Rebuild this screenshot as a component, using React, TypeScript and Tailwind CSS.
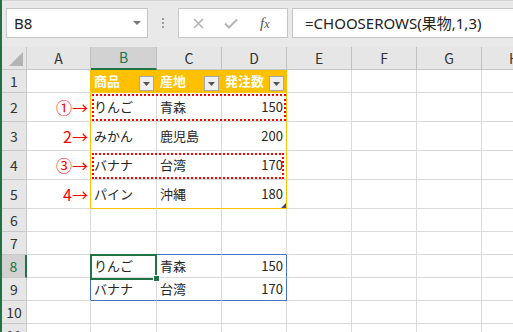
import React from 'react';

const cols = ['A', 'B', 'C', 'D', 'E', 'F', 'G', 'H'];

type CellData = { text?: string; align?: 'left' | 'right'; note?: string };

const body: Record<number, CellData[]> = {
  2: [{ note: '①→' }, { text: 'りんご' }, { text: '青森' }, { text: '150', align: 'right' }],
  3: [{ note: '2→' }, { text: 'みかん' }, { text: '鹿児島' }, { text: '200', align: 'right' }],
  4: [{ note: '③→' }, { text: 'バナナ' }, { text: '台湾' }, { text: '170', align: 'right' }],
  5: [{ note: '4→' }, { text: 'パイン' }, { text: '沖縄' }, { text: '180', align: 'right' }],
  8: [{}, { text: 'りんご' }, { text: '青森' }, { text: '150', align: 'right' }],
  9: [{}, { text: 'バナナ' }, { text: '台湾' }, { text: '170', align: 'right' }],
};

function FilterButton() {
  return (
    <div className="mb-[1px] mr-[2px] flex h-[15px] w-[15px] shrink-0 items-center justify-center self-end border border-[#a6a6a6] bg-[#efefef]">
      <svg width="7" height="4" viewBox="0 0 7 4">
        <polygon points="0,0 7,0 3.5,4" fill="#555" />
      </svg>
    </div>
  );
}

function cellBorder(row: number, col: number) {
  // col: 0 = A, 1 = B ...
  let right = 'border-r-[#dadada]';
  let bottom = 'border-b-[#dadada]';
  if (row >= 1 && row <= 5 && (col === 0 || col === 3)) right = 'border-r-[#ffc000]';
  if (row === 1 && col >= 1 && col <= 3) {
    right = 'border-r-[#ffc000]';
    bottom = 'border-b-[#ffc000]';
  }
  if (row === 5 && col >= 1 && col <= 3) bottom = 'border-b-[#ffc000]';
  if ((row === 8 || row === 9) && (col === 0 || col === 3)) right = 'border-r-[#4472c4]';
  if ((row === 7 || row === 9) && col >= 1 && col <= 3) bottom = 'border-b-[#4472c4]';
  return `${right} ${bottom}`;
}

function Cell({ row, col }: { row: number; col: number }) {
  const data = body[row]?.[col];
  const isHead = row === 1 && col >= 1 && col <= 3;
  const heads = ['商品', '産地', '発注数'];

  return (
    <div
      className={`relative flex items-center border-r border-b ${cellBorder(row, col)} ${
        isHead ? 'bg-[#ffc000]' : 'bg-white'
      }`}
    >
      {isHead && (
        <div className="flex h-full w-full items-center justify-between pl-[3px]">
          <span className="text-[13px] font-bold text-white">{heads[col - 1]}</span>
          <FilterButton />
        </div>
      )}
      {data?.text && (
        <span
          className={`w-full px-[3px] text-[13px] text-[#262626] ${data.align === 'right' ? 'text-right' : 'text-left'}`}
        >
          {data.text}
        </span>
      )}
      {data?.note && (
        <span className="w-full pr-[2px] text-right text-[16px] leading-none text-[#ff0000]">{data.note}</span>
      )}
      {row === 2 && col === 1 && (
        <div className="pointer-events-none absolute top-[1px] left-[1px] z-10 h-[27px] w-[194px] border-2 border-dotted border-[#ff0000]" />
      )}
      {row === 4 && col === 1 && (
        <div className="pointer-events-none absolute top-[2px] left-[1px] z-10 h-[26px] w-[192px] border-2 border-dotted border-[#ff0000]" />
      )}
      {row === 5 && col === 3 && (
        <svg className="absolute right-0 bottom-0" width="5" height="5" viewBox="0 0 5 5">
          <polygon points="5,0 5,5 0,5" fill="#3f4b8c" />
        </svg>
      )}
      {row === 8 && col === 1 && (
        <>
          <div className="pointer-events-none absolute top-[-1px] left-[-1px] z-10 h-[26px] w-[67px] border-2 border-[#217346]" />
          <div className="absolute top-[20px] left-[62px] z-20 h-[7px] w-[7px] border border-white bg-[#217346]" />
        </>
      )}
    </div>
  );
}

export default function App() {
  const rowNums = [1, 2, 3, 4, 5, 6, 7, 8, 9, 10, 11];

  return (
    <div
      className="h-[332px] w-[513px] overflow-hidden border-l-2 border-[#217346] bg-white"
      style={{ fontFamily: '"Noto Sans CJK JP", "Noto Sans", sans-serif' }}
    >
      {/* formula bar */}
      <div className="flex h-[47px] items-start border-t border-[#d4d4d4] bg-[#e9e9e9] pt-[7px]">
        <div className="ml-[4px] flex h-[30px] w-[142px] items-center justify-between border border-[#c6c6c6] bg-white pr-[6px] pl-[7px]">
          <span className="text-[15px] text-[#222]" style={{ fontFamily: '"Noto Sans", sans-serif' }}>
            B8
          </span>
          <svg width="8" height="4" viewBox="0 0 8 4">
            <polygon points="0,0 8,0 4,4" fill="#777" />
          </svg>
        </div>
        <div className="mt-[10px] ml-[14px] flex w-[3px] flex-col gap-[2px]">
          <div className="h-[2px] w-[2px] bg-[#9a9a9a]" />
          <div className="h-[2px] w-[2px] bg-[#9a9a9a]" />
          <div className="h-[2px] w-[2px] bg-[#9a9a9a]" />
        </div>
        <div className="ml-[13px] flex h-[30px] w-[110px] items-center border border-[#c6c6c6] bg-white">
          <svg className="ml-[14px]" width="11" height="11" viewBox="0 0 11 11">
            <path d="M1 1 L10 10 M10 1 L1 10" stroke="#b4b4b4" strokeWidth="1.6" />
          </svg>
          <svg className="ml-[20px]" width="14" height="11" viewBox="0 0 14 11">
            <path d="M1 5.5 L5 9.5 L13 1.5" stroke="#b4b4b4" strokeWidth="2" fill="none" />
          </svg>
          <span
            className="ml-[22px] text-[15px] text-[#555] italic"
            style={{ fontFamily: '"Liberation Serif", serif' }}
          >
            f<span className="text-[12px]">x</span>
          </span>
        </div>
        <div className="ml-[4px] flex h-[30px] flex-1 items-center border border-r-0 border-[#c6c6c6] bg-white pl-[12px]">
          <span
            className="text-[15px] whitespace-nowrap text-[#222]"
            style={{ fontFamily: '"Noto Sans", "Noto Sans CJK JP", sans-serif' }}
          >
            =CHOOSEROWS(果物,1,3)
          </span>
        </div>
      </div>

      {/* sheet */}
      <div className="grid grid-cols-[25px_64px_66px_65px_65px_65px_65px_65px_65px] grid-rows-[23px_23px_29px_29px_29px_29px_23px_23px_23px_23px_23px_23px]">
        <div className="relative border-r border-b border-[#c8c8c8] bg-[#e6e6e6]">
          <svg className="absolute right-[3px] bottom-[3px]" width="14" height="14" viewBox="0 0 14 14">
            <polygon points="14,0 14,14 0,14" fill="#b4b4b4" />
          </svg>
        </div>
        {cols.map((c) => (
          <div
            key={c}
            className={`flex items-center justify-center border-r border-[#c0c0c0] text-[14px] ${
              c === 'B'
                ? 'border-b-2 border-b-[#217346] bg-[#d2d2d2] text-[#217346]'
                : 'border-b border-b-[#c8c8c8] bg-[#e6e6e6] text-[#333]'
            }`}
          >
            {c}
          </div>
        ))}
        {rowNums.map((r) => (
          <React.Fragment key={r}>
            <div
              className={`flex items-center justify-center border-b border-[#c8c8c8] text-[14px] ${
                r === 8
                  ? 'border-r-2 border-r-[#217346] bg-[#d2d2d2] text-[#217346]'
                  : 'border-r border-r-[#c8c8c8] bg-[#e6e6e6] text-[#333]'
              }`}
            >
              {r}
            </div>
            {cols.map((c, i) => (
              <Cell key={c} row={r} col={i} />
            ))}
          </React.Fragment>
        ))}
      </div>
    </div>
  );
}
